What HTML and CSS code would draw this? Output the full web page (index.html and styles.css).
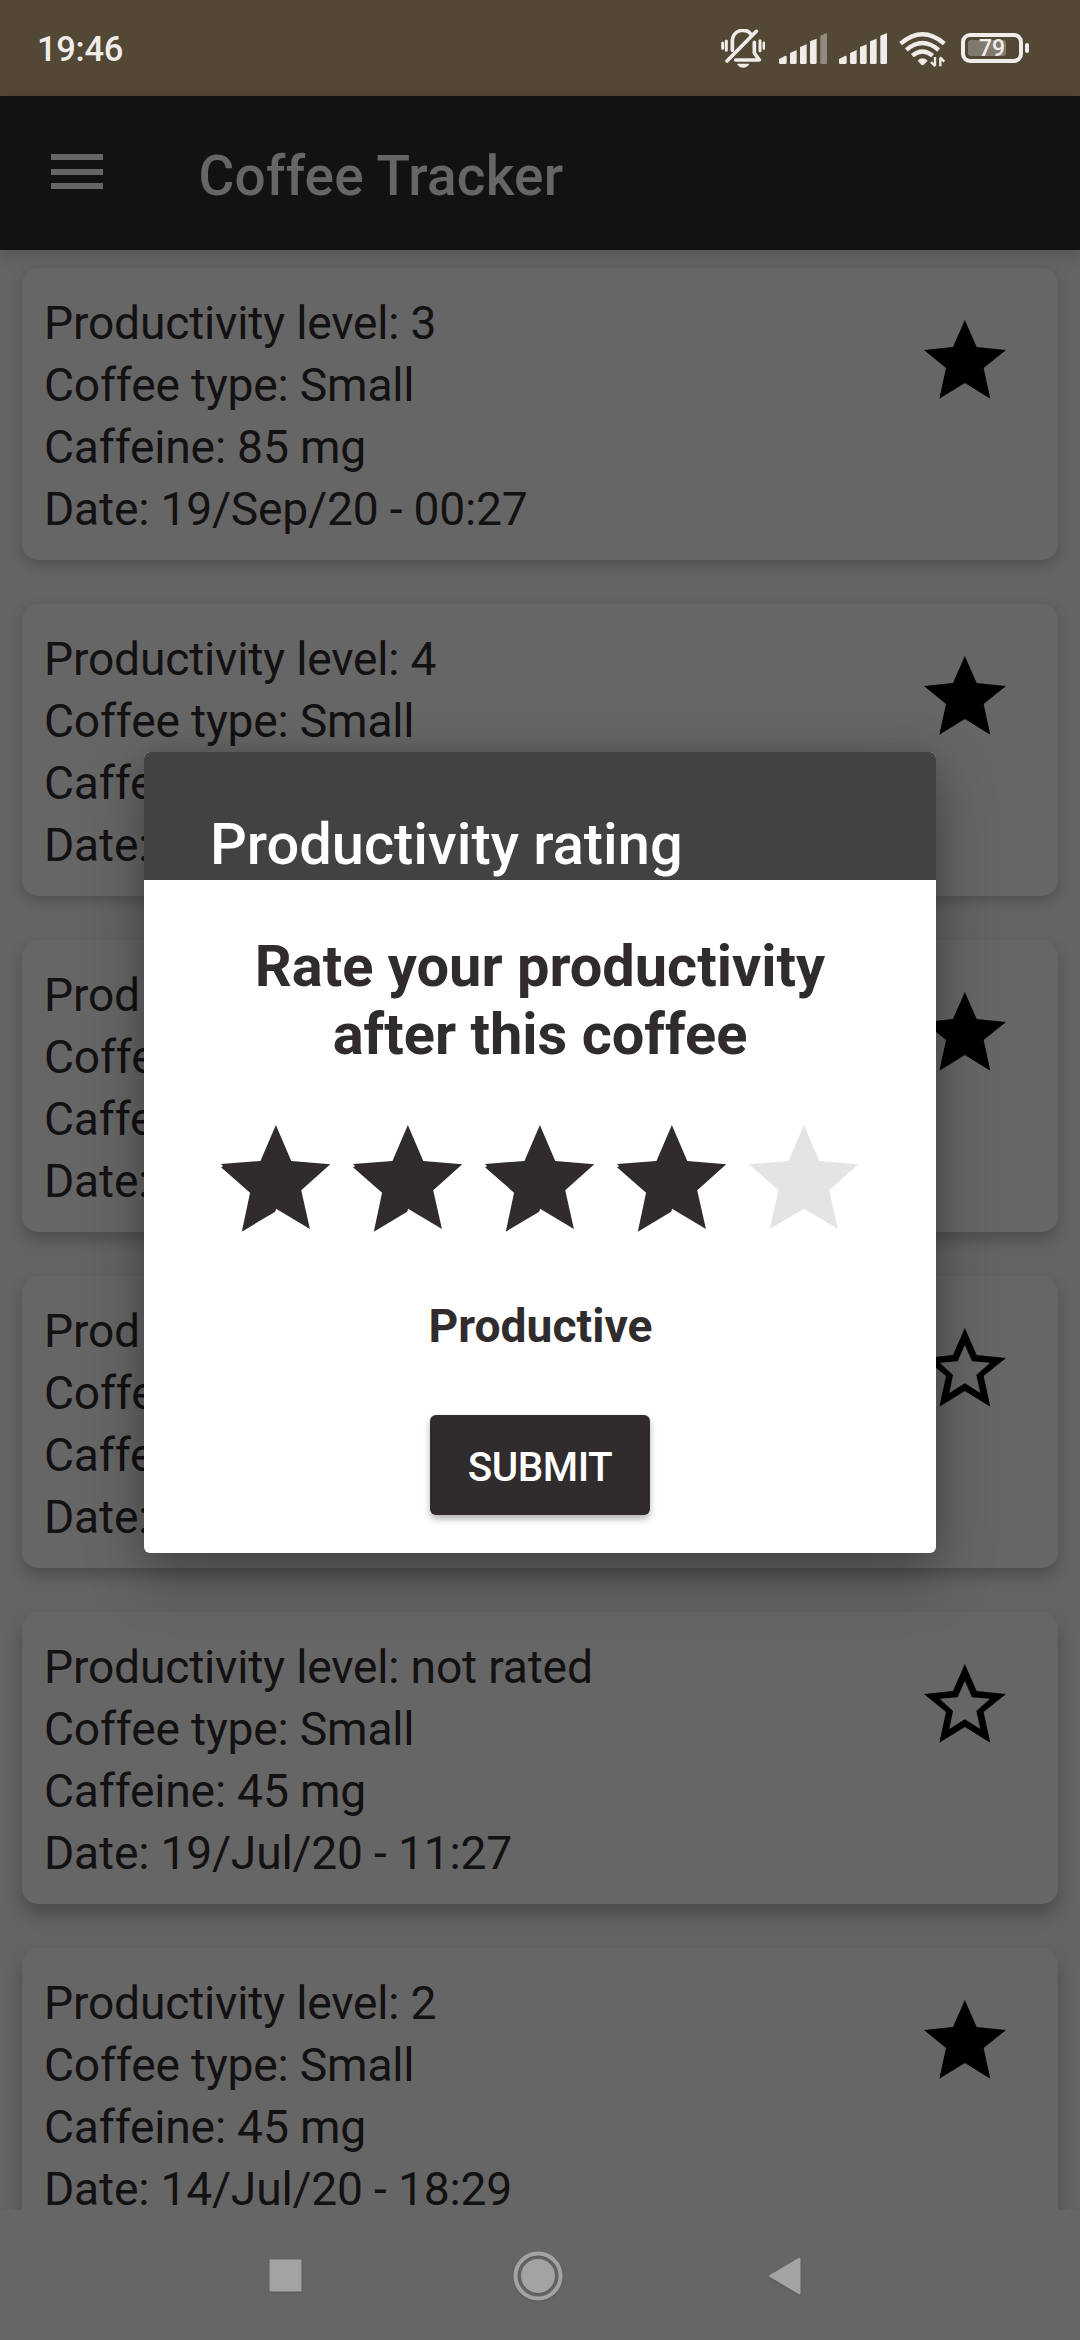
FILE: index.html
```html
<!DOCTYPE html>
<html lang="en">
<head>
<meta charset="utf-8">
<title>Coffee Tracker</title>
<link rel="stylesheet" href="styles.css">
</head>
<body>
<svg class="defs" width="0" height="0" aria-hidden="true">
  <symbol id="star-full" viewBox="131 253 246 236">
    <path d="M253.500 253L289 334L377 343L310 397L330 489L253.500 442L177 489L197 397L131 343L218 334Z"/>
  </symbol>
  <symbol id="star-empty" viewBox="131 253 246 236">
    <path fill-rule="evenodd" d="M253.500 253L289 334L377 343L310 397L330 489L253.500 442L177 489L197 397L131 343L218 334ZM253.500 304L232 353L178 357L218 394L207 448L253.500 419L300 448L288 394L329 357L275 353Z"/>
  </symbol>
  <symbol id="rate-on" viewBox="49 76 252 320" preserveAspectRatio="none">
    <path d="M175.500 76L211 184L301 194L234 272L254 388L176 327L174 336L97 396L116 279L49 203L54 200L49 193L140 184Z"/>
  </symbol>
  <symbol id="rate-off" viewBox="49 76 252 320" preserveAspectRatio="none">
    <path d="M175.500 76L211 184L301 194L234 272L254 388L175.500 327L97 388L117 272L49 194L140 184Z"/>
  </symbol>
</svg>
<div class="screen">
  <header class="status">
    <span class="clock">19:46</span>
    <div class="status-icons">
      <svg class="bell" viewBox="62 88 134 118" fill="none" stroke="#f0ece9" stroke-linecap="round">
        <path stroke-width="9" d="M67 130V146M78 124V152M191 130V146M179 123V153"/>
        <path stroke-width="11" stroke-linejoin="round" d="M96 152V125C96 86 144 84 153 106M106 181H177L162 160V128M168 95L80 184"/>
        <path fill="#f0ece9" stroke="none" d="M110 192H147C141 208 116 208 110 192Z"/>
      </svg>
      <svg class="signal signal-1" viewBox="237 99 145 94" fill="#f0ece9">
        <path d="M237 177L256 167Q260 167 260 171V188Q260 192 256 192H241Q237 192 237 188ZM270 159L290 150V188Q290 192 286 192H274Q270 192 270 188ZM300 141L320 133V188Q320 192 316 192H304Q300 192 300 188ZM330 124L350 116V188Q350 192 346 192H334Q330 192 330 188Z"/>
        <path fill="#938a81" d="M361 107L381 99V188Q381 192 377 192H365Q361 192 361 188Z"/>
      </svg>
      <svg class="signal signal-2" viewBox="237 99 145 94" fill="#f0ece9">
        <path d="M237 177L256 167Q260 167 260 171V188Q260 192 256 192H241Q237 192 237 188ZM270 159L290 150V188Q290 192 286 192H274Q270 192 270 188ZM300 141L320 133V188Q320 192 316 192H304Q300 192 300 188ZM330 124L350 116V188Q350 192 346 192H334Q330 192 330 188ZM361 107L381 99V188Q381 192 377 192H365Q361 192 361 188Z"/>
      </svg>
      <svg class="wifi" viewBox="598 92 142 110" fill="none" stroke="#f0ece9" stroke-width="13">
        <path d="M603 130Q668 74 734 130M620 149Q668 107 717 149M638 166Q668 141 699 166"/>
        <path fill="#f0ece9" stroke="none" d="M654 181Q668 167 684 181L672 193Q668 196 665 193Z"/>
        <path stroke-width="7" d="M706 170V196M694 185L707 198M722 198V172M734 184L721 171"/>
      </svg>
      <div class="battery">
        <div class="battery-body"><span class="battery-level"></span><span class="battery-text">79</span></div>
        <span class="battery-tip"></span>
      </div>
    </div>
  </header>
  <div class="appbar">
    <div class="menu"><i></i><i></i><i></i></div>
    <h1 class="app-title">Coffee Tracker</h1>
  </div>
  <main class="list">
    <article class="card lift-1">
      <div class="info"><p>Productivity level: 3</p><p>Coffee type: Small</p><p>Caffeine: 85 mg</p><p>Date: 19/Sep/20 - 00:27</p></div>
      <svg class="star"><use href="#star-full"/></svg>
    </article>
    <article class="card lift-1">
      <div class="info"><p>Productivity level: 4</p><p>Coffee type: Small</p><p>Caffe</p><p>Date:</p></div>
      <svg class="star"><use href="#star-full"/></svg>
    </article>
    <article class="card lift-2">
      <div class="info"><p>Prod</p><p>Coffe</p><p>Caffe</p><p>Date:</p></div>
      <svg class="star"><use href="#star-full"/></svg>
    </article>
    <article class="card lift-2">
      <div class="info"><p>Prod</p><p>Coffe</p><p>Caffe</p><p>Date:</p></div>
      <svg class="star"><use href="#star-empty"/></svg>
    </article>
    <article class="card lift-3">
      <div class="info"><p>Productivity level: not rated</p><p>Coffee type: Small</p><p>Caffeine: 45 mg</p><p>Date: 19/Jul/20 - 11:27</p></div>
      <svg class="star"><use href="#star-empty"/></svg>
    </article>
    <article class="card lift-3">
      <div class="info"><p>Productivity level: 2</p><p>Coffee type: Small</p><p>Caffeine: 45 mg</p><p>Date: 14/Jul/20 - 18:29</p></div>
      <svg class="star"><use href="#star-full"/></svg>
    </article>
  </main>
  <nav class="navbar">
    <svg class="nav-icon" viewBox="0 0 56 56"><rect x="9.500" y="11.500" width="32" height="32" rx="1"/></svg>
    <svg class="nav-icon" viewBox="0 0 56 56"><circle cx="28" cy="28" r="22.500" fill="none" stroke="#a3a3a3" stroke-width="4"/><circle cx="28" cy="28" r="17"/></svg>
    <svg class="nav-icon" viewBox="0 0 56 56"><path d="M9.500 28.800Q8.500 28 9.500 27.200L38.500 10Q40.500 9 40.500 11V45Q40.500 47 38.500 46Z"/></svg>
  </nav>
  <section class="dialog">
    <h2 class="dialog-title">Productivity rating</h2>
    <div class="dialog-body">
      <p class="question">Rate your productivity<br>after this coffee</p>
      <div class="rating">
        <svg class="rate on"><use href="#rate-on"/></svg>
        <svg class="rate on"><use href="#rate-on"/></svg>
        <svg class="rate on"><use href="#rate-on"/></svg>
        <svg class="rate on"><use href="#rate-on"/></svg>
        <svg class="rate off"><use href="#rate-off"/></svg>
      </div>
      <p class="verdict">Productive</p>
      <button class="submit">SUBMIT</button>
    </div>
  </section>
</div>
</body>
</html>
```
FILE: styles.css
```css
* { box-sizing: border-box; margin: 0; padding: 0; }
body { font-family: Roboto, sans-serif; background: #666; }
svg { display: block; flex: none; }
.defs { position: absolute; }
.screen { position: relative; width: 1080px; height: 2340px; display: flex; flex-direction: column; overflow: hidden; }

.status { height: 96px; flex: none; background: #534736; display: flex; justify-content: space-between; padding: 0 51px 0 37px; }
.clock { font-size: 34.5px; font-weight: 500; line-height: 40px; letter-spacing: -.3px; margin-top: 29px; color: #f0ece9; }
.status-icons { display: flex; align-items: flex-start; }
.bell { width: 44.67px; height: 39.33px; margin-top: 29.33px; }
.signal { width: 48.33px; height: 31.33px; margin-top: 33px; }
.signal-1 { margin-left: 13.67px; }
.signal-2 { margin-left: 11.67px; }
.wifi { width: 47.33px; height: 36.67px; margin: 30.67px 0 0 12px; }
.battery { display: flex; align-items: center; gap: 2px; margin: 33px 0 0 14.33px; }
.battery-body { width: 62px; height: 30px; border: 4px solid #f0ece9; border-radius: 9px; padding: 3px; position: relative; }
.battery-level { display: block; width: 38px; height: 16px; border-radius: 3px; background: #82796d; }
.battery-text { position: absolute; inset: 0; font-size: 23px; font-weight: 500; line-height: 23px; text-align: center; color: #f0ece9; }
.battery-tip { width: 4px; height: 10px; border-radius: 2px; background: #f0ece9; }

.appbar { height: 154px; flex: none; background: #131112; display: flex; box-shadow: 0 4px 14px rgba(0,0,0,.18); z-index: 1; padding-left: 51px; }
.menu { width: 52px; margin-top: 58px; display: flex; flex-direction: column; gap: 8.5px; }
.menu i { height: 6px; background: #666; }
.app-title { font-size: 55px; font-weight: 500; line-height: 64px; letter-spacing: .2px; color: #666; margin: 48px 0 0 95.5px; }

.list { flex: 1; min-height: 0; overflow: hidden; background: #646464; padding: 18px 22px 0; display: flex; flex-direction: column; gap: 44px; }
.card { height: 292px; flex: none; border-radius: 16px; background: #666; padding: 24px 52px 0 22px; display: flex; justify-content: space-between; }
.lift-1 { box-shadow: 0 5px 14px rgba(0,0,0,.2); }
.lift-2 { box-shadow: 0 8px 15px rgba(0,0,0,.22); }
.lift-3 { box-shadow: 0 11px 17px rgba(0,0,0,.25); }
.info { font-size: 46.2px; line-height: 62px; letter-spacing: -.2px; color: #131112; white-space: nowrap; }
.star { width: 82px; height: 78.67px; margin-top: 28.33px; fill: #000; }

.navbar { height: 130px; flex: none; background: #666; display: flex; justify-content: center; gap: 194px; padding: 37.5px 5px 0 0; fill: #a3a3a3; }
.nav-icon { width: 56px; height: 56px; filter: drop-shadow(0 1px 1px rgba(0,0,0,.15)); }

.dialog { position: absolute; z-index: 2; left: 144px; top: 752px; width: 792px; height: 801px; border-radius: 6px; overflow: hidden; background: #fff; box-shadow: 0 22px 60px rgba(0,0,0,.32), 0 0 26px rgba(0,0,0,.1); }
.dialog-title { height: 128px; background: #424242; color: #fff; padding: 58px 0 0 66px; font-size: 57.75px; line-height: 68px; font-weight: 500; }
.dialog-body { display: flex; flex-direction: column; align-items: center; color: #302b2d; padding-top: 52px; }
.question { font-size: 57.75px; line-height: 68px; font-weight: 700; text-align: center; }
.rating { display: flex; gap: 22.7px; margin-top: 57.3px; }
.rate { width: 109.3px; height: 106.67px; }
.on { fill: #302b2d; }
.off { fill: #e4e4e4; }
.verdict { font-size: 46.2px; line-height: 54px; font-weight: 700; margin: 67.4px 0 0 1px; }
.submit { width: 220px; height: 100px; margin-top: 62px; border: 0; border-radius: 6px; background: #302b2d; color: #fff; font: 500 40.43px/48px Roboto, sans-serif; letter-spacing: -.5px; padding-top: 4px; box-shadow: 0 4px 7px rgba(0,0,0,.3); }
```
